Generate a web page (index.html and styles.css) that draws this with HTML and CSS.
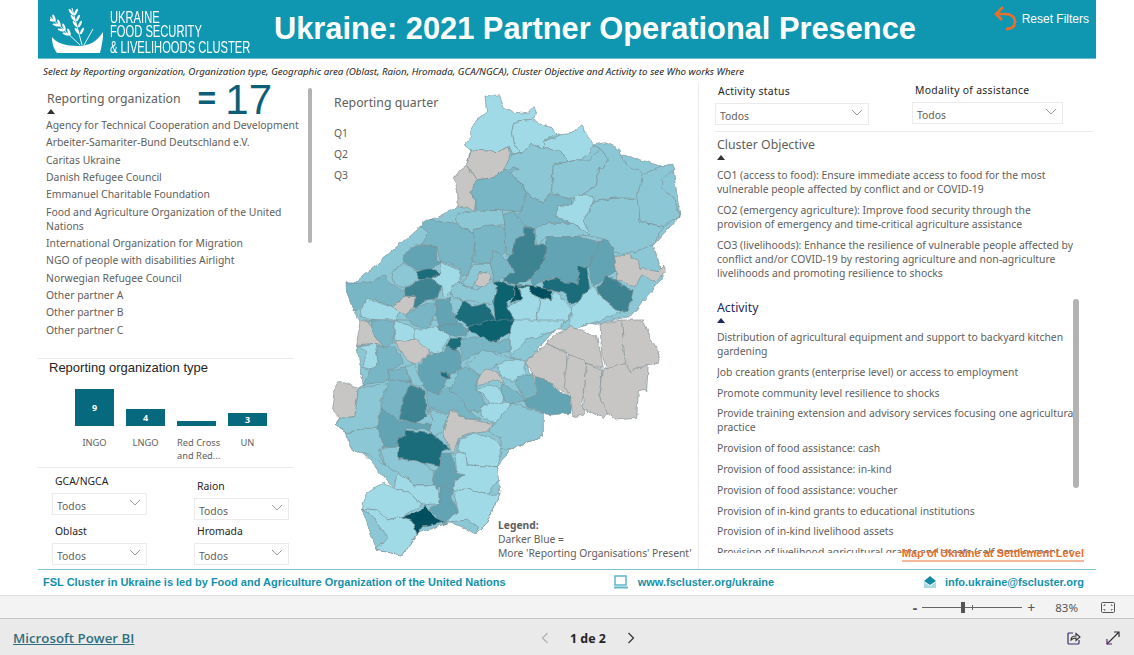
FILE: index.html
```html
<!DOCTYPE html>
<html lang="en">
<head>
    <meta charset="UTF-8">
    <title>Ukraine: 2021 Partner Operational Presence</title>
    <link rel="stylesheet" href="styles.css">
</head>
<body>
<div class="report">
    <header class="banner">
        <div class="logo">
            <svg class="logo-mark" viewBox="50 5 56 50" width="56" height="50">
                <path d="M52 37 C56 43 66 46 78 46 C90 46 97 41 103 32 L103 37 C102 44 101 49 100 53 L57 53 C54 49 52 44 52 37 Z" fill="#fff"/>
                <path d="M48 15 L80 45 M72 8 L82 45 M93 29 L84 45" stroke="#fff" stroke-width="0.9" fill="none"/>
                <g fill="#fff">
                    <ellipse cx="51" cy="20" rx="3.6" ry="1.2" transform="rotate(15 51 20)"/>
                    <ellipse cx="54" cy="18" rx="3.6" ry="1.2" transform="rotate(70 54 18)"/>
                    <ellipse cx="56" cy="25" rx="3.6" ry="1.2" transform="rotate(15 56 25)"/>
                    <ellipse cx="59" cy="23" rx="3.6" ry="1.2" transform="rotate(70 59 23)"/>
                    <ellipse cx="61" cy="30" rx="3.6" ry="1.2" transform="rotate(15 61 30)"/>
                    <ellipse cx="64" cy="27" rx="3.6" ry="1.2" transform="rotate(70 64 27)"/>
                    <ellipse cx="66" cy="34" rx="3.6" ry="1.2" transform="rotate(15 66 34)"/>
                    <ellipse cx="69" cy="32" rx="3.6" ry="1.2" transform="rotate(70 69 32)"/>
                    <ellipse cx="71" cy="12" rx="3.6" ry="1.2" transform="rotate(55 71 12)"/>
                    <ellipse cx="76" cy="12" rx="3.6" ry="1.2" transform="rotate(115 76 12)"/>
                    <ellipse cx="73" cy="18" rx="3.6" ry="1.2" transform="rotate(55 73 18)"/>
                    <ellipse cx="78" cy="18" rx="3.6" ry="1.2" transform="rotate(115 78 18)"/>
                    <ellipse cx="75" cy="24" rx="3.6" ry="1.2" transform="rotate(55 75 24)"/>
                    <ellipse cx="80" cy="24" rx="3.6" ry="1.2" transform="rotate(115 80 24)"/>
                    <ellipse cx="77" cy="31" rx="3.6" ry="1.2" transform="rotate(55 77 31)"/>
                    <ellipse cx="82" cy="31" rx="3.6" ry="1.2" transform="rotate(115 82 31)"/>
                </g>
            </svg>
            <div class="logo-text">UKRAINE<br>FOOD SECURITY<br>&amp; LIVELIHOODS CLUSTER</div>
        </div>
        <h1>Ukraine: 2021 Partner Operational Presence</h1>
        <div class="reset">
            <svg viewBox="0 0 26 26" width="26" height="26"><path d="M3 9 L12 9 C18 9 22 12 22 17 C22 22 18 24 13 24 M10 2 L3 9 L9 15" fill="none" stroke="#e8702a" stroke-width="2.6"/></svg>
            <span>Reset Filters</span>
        </div>
    </header>

    <p class="hint">Select by Reporting organization, Organization type, Geographic area (Oblast, Raion, Hromada, GCA/NGCA), Cluster Objective and Activity to see Who works Where</p>

    <main class="panels">
        <section class="left">
            <div class="org-head">
                <div class="slicer-title">Reporting organization<i class="caret"></i></div>
                <div class="org-count"><span class="eq">=</span><span class="num">17</span></div>
            </div>
            <ul class="org-list">
                <li>Agency for Technical Cooperation and Development</li>
                <li>Arbeiter-Samariter-Bund Deutschland e.V.</li>
                <li>Caritas Ukraine</li>
                <li>Danish Refugee Council</li>
                <li>Emmanuel Charitable Foundation</li>
                <li>Food and Agriculture Organization of the United Nations</li>
                <li>International Organization for Migration</li>
                <li>NGO of people with disabilities Airlight</li>
                <li>Norwegian Refugee Council</li>
                <li>Other partner A</li>
                <li>Other partner B</li>
                <li>Other partner C</li>
            </ul>
            <div class="type-box">
                <h3>Reporting organization type</h3>
                <div class="bars">
                    <div class="bar-col"><div class="bar-slot"><div class="bar" style="height:37px">9</div></div><span>INGO</span></div>
                    <div class="bar-col"><div class="bar-slot"><div class="bar" style="height:17px">4</div></div><span>LNGO</span></div>
                    <div class="bar-col"><div class="bar-slot"><div class="bar" style="height:5px"></div></div><span>Red Cross<br>and Red...</span></div>
                    <div class="bar-col"><div class="bar-slot"><div class="bar" style="height:13px">3</div></div><span>UN</span></div>
                </div>
            </div>
            <div class="geo">
                <div class="geo-col">
                    <label>GCA/NGCA</label>
                    <div class="drop">Todos<svg viewBox="0 0 12 7" width="12" height="7"><path d="M1 1 L6 6 L11 1" fill="none" stroke="#a19f9d"/></svg></div>
                    <label>Oblast</label>
                    <div class="drop">Todos<svg viewBox="0 0 12 7" width="12" height="7"><path d="M1 1 L6 6 L11 1" fill="none" stroke="#a19f9d"/></svg></div>
                </div>
                <div class="geo-col second">
                    <label>Raion</label>
                    <div class="drop">Todos<svg viewBox="0 0 12 7" width="12" height="7"><path d="M1 1 L6 6 L11 1" fill="none" stroke="#a19f9d"/></svg></div>
                    <label>Hromada</label>
                    <div class="drop">Todos<svg viewBox="0 0 12 7" width="12" height="7"><path d="M1 1 L6 6 L11 1" fill="none" stroke="#a19f9d"/></svg></div>
                </div>
            </div>
        </section>

        <section class="middle">
            <div class="quarter">
                <div class="slicer-title">Reporting quarter</div>
                <ul>
                    <li>Q1</li>
                    <li>Q2</li>
                    <li>Q3</li>
                </ul>
            </div>
            <svg class="map" viewBox="0 0 1110 1470" width="370" height="490">
                <defs>
                    <filter id="rough" x="-2%" y="-2%" width="104%" height="104%">
                        <feTurbulence type="fractalNoise" baseFrequency="0.045" numOctaves="2" seed="4"/>
                        <feDisplacementMap in="SourceGraphic" scale="15" xChannelSelector="R" yChannelSelector="G"/>
                    </filter>
                </defs>
                <g filter="url(#rough)">
                <g class="map-base">
                    <polygon class="c2" points="420,180 560,90 800,170 1030,240 1050,378 970,465 1000,560 900,680 700,720 400,720 100,720 50,600 270,410 385,350"/>
                    <polygon class="c2" points="120,690 700,690 590,815 640,1040 540,1080 500,1130 510,1210 470,1300 440,1330 360,1295 265,1330 215,1395 140,1380 95,1255 190,1195 50,1030 15,1005 85,895 100,885 80,765"/>
                </g>
                <g class="map-top">
                    <polygon class="c1" points="465,18 508,14 522,50 555,72 570,70 600,65 612,50 620,70 605,88 570,92 550,100 545,130 548,150 575,190 545,195 535,170 505,185 420,180 403,165 425,140 418,125 440,90 470,70"/>
                    <polygon class="c1" points="570,92 605,88 630,105 665,112 678,130 640,155 642,175 600,160 575,190 548,150 545,130 550,100"/>
                    <polygon class="c1" points="640,155 690,135 725,130 755,102 775,140 790,165 780,190 745,210 715,215 690,185 642,175"/>
                    <polygon class="c2" points="600,160 642,175 690,185 715,215 670,225 665,305 640,335 610,325 585,305 575,280 540,245 520,240 545,195 575,190"/>
                    <polygon class="c2" points="715,215 745,210 775,210 810,175 835,205 820,235 805,240 800,285 750,320 725,325 670,310 665,305 670,225"/>
                    <polygon class="c2" points="790,165 825,158 855,170 870,180 885,220 940,250 925,325 850,325 795,335 750,320 800,285 805,240 820,235 835,205 810,175"/>
                    <polygon class="c2" points="940,250 1025,222 1032,240 995,265 995,295 1030,325 1050,378 1000,410 930,395 920,325"/>
                    <polygon class="g" points="425,180 505,185 535,170 540,205 520,240 495,262 440,270 410,225"/>
                    <polygon class="g" points="410,225 440,270 420,305 440,335 435,362 385,350 382,300 372,265 390,240"/>
                    <polygon class="c3" points="495,262 520,240 545,235 565,235 540,250 575,280 590,320 575,360 550,362 520,360 440,365 440,335 420,305 440,270"/>
                    <polygon class="c3" points="590,305 610,325 640,335 665,312 725,325 725,345 680,350 678,380 730,400 650,400 620,420 575,410 550,375 575,360"/>
                    <polygon class="c2" points="795,335 850,325 925,325 930,395 1000,410 970,465 900,490 850,490 830,450 770,435 760,385"/>
                    <polygon class="c1" points="680,350 725,345 740,315 795,320 790,340 760,385 780,435 735,405 678,380"/>
                    <polygon class="c2" points="650,400 730,400 780,435 740,440 650,440 620,465 612,420"/>
                    <polygon class="c2" points="382,370 440,365 520,360 525,405 480,405 430,430 390,410 380,390"/>
                    <polygon class="c3" points="520,375 550,362 585,410 580,435 552,450 550,495 530,495 520,440 525,405"/>
                    <polygon class="c3" points="430,420 480,405 522,412 525,490 480,520 430,515 435,460"/>
                    <polygon class="c3" points="275,400 290,390 380,400 390,410 430,430 435,460 425,520 415,550 395,560 385,535 330,510 320,470 275,465 295,430 270,410"/>
                    <polygon class="c5" points="580,415 610,415 615,465 650,465 645,510 610,560 560,585 520,575 525,550 555,545 530,510 550,490 552,450 580,435"/>
                    <polygon class="c4" points="650,440 740,440 810,455 785,530 750,530 745,580 705,580 680,565 640,570 610,590 605,565 645,510"/>
                    <polygon class="c4" points="810,455 830,445 850,480 850,510 860,540 830,560 790,590 775,530"/>
                    <polygon class="g" points="850,505 890,490 920,510 930,535 985,545 1005,525 1005,545 975,575 935,555 915,590 860,570 860,540"/>
                    <polygon class="c5" points="830,560 860,570 880,590 910,600 895,665 860,660 815,625 800,595"/>
                    <polygon class="c6" points="745,530 770,530 780,600 750,635 720,640 705,610 640,595 635,575 680,565 705,580 745,580"/>
                    <polygon class="c3" points="490,480 530,510 555,545 525,560 495,575 480,520"/>
                    <polygon class="c2" points="430,520 480,520 495,575 485,570 470,545 450,545 430,595 390,580 415,550"/>
                    <polygon class="g" points="435,575 445,555 470,545 483,560 480,575 465,595 445,590"/>
                    <polygon class="c4" points="220,495 245,470 275,465 320,470 320,510 335,515 300,540 255,540 240,525 220,515"/>
                    <polygon class="c1" points="330,515 385,540 395,560 385,580 345,625 335,590 300,565 330,550"/>
                    <polygon class="c6" points="255,545 300,535 330,550 300,565 270,570"/>
                    <polygon class="c2" points="185,545 220,520 240,525 255,545 270,570 225,590 195,585"/>
                    <polygon class="c3" points="48,578 85,580 130,575 160,555 190,590 225,600 220,620 190,650 150,635 120,625 100,650 70,660 50,610"/>
                    <polygon class="c5" points="225,595 270,570 300,565 335,590 325,625 290,630 255,655 225,620"/>
                    <polygon class="g" points="190,650 225,618 255,620 250,655 225,675 205,665"/>
                    <polygon class="c2" points="360,585 385,580 440,600 490,575 500,590 490,640 470,640 420,635 400,630 365,620"/>
                    <polygon class="c1" points="90,655 115,625 130,635 190,650 205,665 200,690 150,690 95,685"/>
                    <polygon class="c3" points="255,655 290,640 315,640 320,670 290,720 240,700 230,675"/>
                    <polygon class="c4" points="315,630 360,625 370,670 395,720 330,720 320,680"/>
                    <polygon class="c6" points="375,680 400,630 430,650 465,640 500,690 470,715 420,715"/>
                    <polygon class="c7" points="490,575 500,572 555,590 550,620 530,640 550,680 550,720 500,720 490,640 500,590"/>
                    <polygon class="c1" points="565,590 595,592 610,615 630,625 620,690 570,720 550,680 530,650 575,630"/>
                    <polygon class="c8" points="555,585 610,590 640,595 670,605 660,630 610,615 595,592 565,590 570,615 580,625 540,640 550,620"/>
                    <polygon class="c1" points="630,625 660,630 680,605 725,655 715,690 640,720 620,690"/>
                    <polygon class="c1" points="725,655 760,615 785,590 800,600 815,625 860,660 875,665 815,690 720,720"/>
                </g>
                <g class="map-bottom" transform="translate(0 690)">
                    <polygon class="g" points="90,5 115,0 125,35 162,40 160,78 120,70 80,75 85,40"/>
                    <polygon class="c3" points="125,0 190,0 190,70 160,80 125,35"/>
                    <polygon class="c1" points="190,0 245,20 255,30 260,60 215,65 195,60"/>
                    <polygon class="c1" points="255,30 320,20 360,45 345,70 330,110 295,90 255,65"/>
                    <polygon class="c4" points="320,20 385,10 415,30 410,50 380,50 360,45"/>
                    <polygon class="c7" points="415,20 490,0 550,0 550,30 490,70 415,30"/>
                    <polygon class="c1" points="550,0 700,0 690,25 610,55 590,60 540,110 540,50"/>
                    <polygon class="g" points="195,65 260,60 300,90 300,105 250,135 215,100"/>
                    <polygon class="c1" points="80,78 135,70 145,130 120,150 98,145 110,95"/>
                    <polygon class="c3" points="140,80 195,80 220,130 175,150 175,180 100,195 120,150 145,130"/>
                    <polygon class="c4" points="265,135 295,105 340,95 365,70 395,110 390,150 360,160 345,195 320,230 280,200 265,170"/>
                    <polygon class="c6" points="360,55 395,55 395,75 375,90 350,80"/>
                    <polygon class="c6" points="330,155 355,160 358,178 338,168"/>
                    <polygon class="c3" points="390,60 460,50 500,70 540,55 540,95 480,100 430,100 395,130"/>
                    <polygon class="c2" points="410,130 460,90 520,110 570,115 580,140 560,165 500,135 445,165"/>
                    <polygon class="c3" points="175,150 230,140 240,185 175,180"/>
                    <polygon class="c2" points="230,135 250,135 275,185 280,200 245,195"/>
                    <polygon class="g" points="15,195 35,185 85,205 80,250 75,290 30,295 5,270"/>
                    <polygon class="c2" points="85,205 175,190 175,230 150,240 150,265 145,325 100,325 50,340 15,315 30,295 75,290"/>
                    <polygon class="c3" points="178,180 240,185 240,230 205,300 150,258"/>
                    <polygon class="c5" points="240,195 285,210 290,290 255,310 205,295 220,235"/>
                    <polygon class="c4" points="155,260 205,300 255,310 300,310 300,330 230,325 225,350 205,350 205,385 160,380 145,325"/>
                    <polygon class="c3" points="290,210 325,225 350,200 390,225 415,270 450,300 415,300 370,270 340,280 300,260 295,285"/>
                    <polygon class="c2" points="300,265 340,285 360,275 340,330 310,355 295,330 305,300"/>
                    <polygon class="g" points="360,270 415,300 490,310 470,335 430,340 385,355 370,400 340,345"/>
                    <polygon class="c2" points="50,340 100,325 145,325 160,380 150,410 165,435 110,400 70,395 55,365"/>
                    <polygon class="c6" points="205,350 225,350 225,330 300,340 360,385 335,395 330,440 280,430 205,415"/>
                    <polygon class="c2" points="150,385 205,380 205,415 280,430 310,450 310,495 255,495 205,460 165,435"/>
                    <polygon class="c4" points="335,400 365,400 380,460 405,465 375,480 370,510 325,500 310,510 315,450 330,440"/>
                    <polygon class="c1" points="385,360 440,340 500,360 515,385 500,440 415,435 410,400 380,395"/>
                    <polygon class="c1" points="375,400 410,400 415,435 500,440 505,480 470,525 415,505 370,515 375,480 405,465 380,460"/>
                    <polygon class="c1" points="205,460 255,495 310,495 330,515 330,550 275,555 240,520 190,505"/>
                    <polygon class="c1" points="110,520 160,490 190,505 240,520 275,555 215,590 170,600 140,570 95,565"/>
                    <polygon class="c4" points="330,495 370,510 365,530 385,575 340,615 295,565 330,550"/>
                    <polygon class="c1" points="370,515 415,505 470,525 510,520 490,565 470,610 440,640 445,620 415,600 360,605 340,610 385,575"/>
                    <polygon class="c1" points="95,565 140,570 170,600 215,590 245,600 265,640 215,705 140,690 170,650 130,590"/>
                    <polygon class="c8" points="215,590 265,575 285,555 310,590 340,605 315,615 280,620 262,645 245,600"/>
                    <polygon class="g" points="585,125 650,70 710,100 715,230 650,180 615,170"/>
                    <polygon class="g" points="680,45 720,20 800,50 810,90 820,145 770,130 715,100 650,70"/>
                    <polygon class="g" points="715,100 770,130 765,200 755,250 765,285 725,290 725,225 700,200"/>
                    <polygon class="g" points="770,130 820,150 810,225 840,265 820,295 760,265"/>
                    <polygon class="g" points="820,150 880,130 955,130 950,210 925,215 920,295 860,300 830,275 810,225"/>
                    <polygon class="g" points="810,10 875,0 880,50 900,100 885,130 830,150 815,100"/>
                    <polygon class="g" points="875,0 940,0 965,60 990,100 985,130 945,135 900,155 885,130"/>
                    <polygon class="c3" points="385,150 410,140 445,165 440,200 470,260 450,275 415,270 385,225 360,215"/>
                    <polygon class="c1" points="500,135 560,115 585,125 585,165 545,185 515,165"/>
                    <polygon class="g" points="445,175 465,145 510,160 520,190 490,180 445,195"/>
                    <polygon class="c1" points="435,210 480,195 520,210 515,255 480,250 460,220"/>
                    <polygon class="c1" points="450,260 480,250 545,250 500,310 460,295"/>
                    <polygon class="c2" points="545,250 640,280 640,350 540,390 515,385 510,350 475,335 495,310"/>
                    <polygon class="c3" points="515,190 570,220 590,240 545,250 520,245"/>
                    <polygon class="c3" points="565,170 610,160 620,225 590,240 555,190"/>
                    <polygon class="c4" points="615,170 650,180 700,225 725,225 720,280 660,285 590,260 585,240 620,225"/>
                </g>
                </g>
            </svg>
            <div class="legend"><b>Legend:</b><br>Darker Blue =<br>More 'Reporting Organisations' Present'</div>
        </section>

        <section class="right">
            <div class="right-drops">
                <div class="drop-wrap">
                    <label>Activity status</label>
                    <div class="drop">Todos<svg viewBox="0 0 12 7" width="12" height="7"><path d="M1 1 L6 6 L11 1" fill="none" stroke="#a19f9d"/></svg></div>
                </div>
                <div class="drop-wrap modality">
                    <label>Modality of assistance</label>
                    <div class="drop">Todos<svg viewBox="0 0 12 7" width="12" height="7"><path d="M1 1 L6 6 L11 1" fill="none" stroke="#a19f9d"/></svg></div>
                </div>
            </div>
            <div class="objective">
                <div class="slicer-title">Cluster Objective<i class="caret"></i></div>
                <ul class="long-list">
                    <li>CO1 (access to food): Ensure immediate access to food for the most vulnerable people affected by conflict and or COVID-19</li>
                    <li>CO2 (emergency agriculture): Improve food security through the provision of emergency and time-critical agriculture assistance</li>
                    <li>CO3 (livelihoods): Enhance the resilience of vulnerable people affected by conflict and/or COVID-19 by restoring agriculture and non-agriculture livelihoods and promoting resilience to shocks</li>
                </ul>
            </div>
            <div class="activity">
                <div class="slicer-title navy">Activity<i class="caret navy-caret"></i></div>
                <ul class="long-list">
                    <li>Distribution of agricultural equipment and support to backyard kitchen gardening</li>
                    <li>Job creation grants (enterprise level) or access to employment</li>
                    <li>Promote community level resilience to shocks</li>
                    <li>Provide training extension and advisory services focusing one agricultural practice</li>
                    <li>Provision of food assistance: cash</li>
                    <li>Provision of food assistance: in-kind</li>
                    <li>Provision of food assistance: voucher</li>
                    <li>Provision of in-kind grants to educational institutions</li>
                    <li>Provision of in-kind livelihood assets</li>
                    <li>Provision of livelihood agricultural grants and assets (self-employment or</li>
                </ul>
                <div class="scroll-thumb"></div>
            </div>
            <a class="map-link">Map of Ukraine at Settlement Level</a>
        </section>
    </main>

    <footer class="report-foot">
        <span class="led">FSL Cluster in Ukraine is led by Food and Agriculture Organization of the United Nations</span>
        <span class="foot-link site">
            <svg viewBox="0 0 16 14" width="16" height="14"><path d="M2 1 H13 V10 H2 Z" fill="none" stroke="#5fb6c9" stroke-width="1.5"/><path d="M1 12.5 H15" stroke="#5fb6c9" stroke-width="2"/></svg>
            www.fscluster.org/ukraine
        </span>
        <span class="foot-link">
            <svg viewBox="0 0 14 14" width="14" height="14"><path d="M1 6 L7 1 L13 6 L7 10 Z" fill="#1589a3"/><path d="M1 7 V13 H13 V7 L7 11 Z" fill="#a9dbe6"/></svg>
            info.ukraine@fscluster.org
        </span>
    </footer>
</div>

<div class="zoombar">
    <span class="zoom-sign">-</span>
    <div class="slider"><i class="tick"></i><i class="knob"></i></div>
    <span class="zoom-sign plus">+</span>
    <span class="pct">83%</span>
    <svg viewBox="0 0 14 11" width="14" height="11"><rect x="0.5" y="0.5" width="13" height="10" rx="1" fill="none" stroke="#555"/><path d="M3 4 V3 H4.5 M10 3 H11 V4 M3 7 V8 H4.5 M10 8 H11 V7" fill="none" stroke="#555"/></svg>
</div>

<div class="pbibar">
    <a class="pbi-link">Microsoft Power BI</a>
    <div class="pager">
        <svg viewBox="0 0 8 12" width="8" height="12"><path d="M6.5 1 L1.5 6 L6.5 11" fill="none" stroke="#b3b0ad" stroke-width="1.2"/></svg>
        <b>1 de 2</b>
        <svg viewBox="0 0 8 12" width="8" height="12"><path d="M1.5 1 L6.5 6 L1.5 11" fill="none" stroke="#333" stroke-width="1.2"/></svg>
    </div>
    <div class="pbi-actions">
        <svg viewBox="0 0 14 14" width="14" height="14"><path d="M6 2 H2 Q1 2 1 3 V12 Q1 13 2 13 H11 Q12 13 12 12 V9" fill="none" stroke="#3b2a6b" stroke-width="1.2"/><path d="M4 9 C4 6 6 5 9 5 V2.5 L13 6 L9 9.5 V7 C7 7 5 8 4 9 Z" fill="none" stroke="#333" stroke-width="1.1"/></svg>
        <svg viewBox="0 0 14 14" width="14" height="14"><path d="M1 13 L13 1 M8 1 H13 V6" fill="none" stroke="#333" stroke-width="1.2"/><path d="M1 8 V13 H6" fill="none" stroke="#5c1a7a" stroke-width="1.2"/></svg>
    </div>
</div>
</body>
</html>
```
FILE: styles.css
```css
* {
    box-sizing: border-box;
}
html, body {
    margin: 0;
    height: 655px;
    overflow: hidden;
}
body {
    font-family: "Noto Sans", "Open Sans", sans-serif;
    color: #605e5c;
    background: #fff;
    display: flex;
    flex-direction: column;
}
ul {
    list-style: none;
    margin: 0;
    padding: 0;
}
.report {
    height: 595px;
    margin: 0 38px;
    display: flex;
    flex-direction: column;
}
.banner {
    height: 59px;
    flex: none;
    background: #0f97b1;
    border-bottom: 1px solid #6fbfd0;
    display: flex;
    align-items: flex-start;
    color: #fff;
}
.logo {
    display: flex;
    width: 236px;
    padding: 5px 0 0 12px;
    flex: none;
}
.logo-mark {
    flex: none;
}
.logo-text {
    font-family: "Liberation Sans", sans-serif;
    font-size: 15px;
    line-height: 13.3px;
    margin: 4px 0 0 4px;
    white-space: nowrap;
    transform: scale(0.745, 1.13);
    transform-origin: left top;
}
.banner h1 {
    font-family: "Liberation Sans", Arial, sans-serif;
    font-size: 30.8px;
    font-weight: bold;
    margin: 11px 0 0 0;
    white-space: nowrap;
}
.reset {
    margin: 5px 0 0 auto;
    padding-right: 7px;
    display: flex;
    font-family: "Liberation Sans", Arial, sans-serif;
    font-size: 12px;
    gap: 3px;
}
.reset span {
    margin-top: 7px;
}
.hint {
    height: 24px;
    flex: none;
    margin: 0;
    padding: 6px 0 0 5px;
    font-size: 9.75px;
    font-style: italic;
    color: #252423;
    white-space: nowrap;
}
.panels {
    flex: 1;
    display: flex;
    min-height: 0;
    position: relative;
}
.slicer-title {
    font-size: 12.3px;
    color: #605e5c;
}
.caret {
    display: block;
    width: 0;
    height: 0;
    margin-top: 2px;
    border: 4px solid transparent;
    border-top: 0;
    border-bottom: 5px solid #333;
}
.navy-caret {
    border-bottom-color: #1b2a5e;
}
.left {
    width: 270px;
    flex: none;
    display: flex;
    flex-direction: column;
    font-size: 10.4px;
    position: relative;
}
.left > * {
    flex: none;
}
.org-head {
    display: flex;
    height: 35px;
    padding: 7px 0 0 9px;
}
.org-count {
    color: #0d5f78;
    font-family: "Liberation Sans", Arial, sans-serif;
    margin-left: 17px;
    margin-top: -14px;
    white-space: nowrap;
}
.org-count .eq {
    font-size: 32px;
    font-weight: bold;
    vertical-align: 5px;
}
.org-count .num {
    font-size: 42px;
    margin-left: 9px;
}
.org-list {
    padding: 0 0 0 8px;
    line-height: 14px;
    height: 240px;
}
.org-list li {
    margin-bottom: 3.35px;
    width: 258px;
}
.type-box {
    width: 256px;
    border-top: 1px solid #edebe9;
    border-bottom: 1px solid #edebe9;
    height: 110px;
}
.type-box h3 {
    margin: 0;
    padding: 1px 0 0 11px;
    font-size: 13px;
    font-weight: normal;
    font-family: "Liberation Sans", Arial, sans-serif;
    color: #252423;
}
.bars {
    display: flex;
    padding: 14px 0 0 37px;
    gap: 12px;
}
.bar-col {
    width: 39px;
    font-size: 9.3px;
    line-height: 13px;
    text-align: center;
    white-space: nowrap;
}
.bar-slot {
    height: 37px;
    display: flex;
    align-items: flex-end;
    margin-bottom: 10px;
}
.bar {
    width: 100%;
    background: #06697d;
    color: #fff;
    font-weight: bold;
    font-size: 9px;
    display: flex;
    align-items: center;
    justify-content: center;
}
.geo {
    display: flex;
    padding: 6px 0 0 14px;
}
.geo-col {
    width: 142px;
    flex: none;
    display: flex;
    flex-direction: column;
}
.geo-col.second {
    padding-top: 5px;
}
label {
    font-size: 10.4px;
    line-height: 14px;
    color: #252423;
    display: block;
    padding-left: 3px;
}
.geo-col .drop {
    margin: 5px 0 9px;
}
.geo-col.second .drop {
    margin: 5px 0 4px;
}
.drop {
    width: 95px;
    height: 22px;
    margin-top: 4px;
    border: 1px solid #edebe9;
    padding: 3px 5px 0 4px;
    font-size: 10.4px;
    display: flex;
    align-items: center;
    justify-content: space-between;
}
.drop svg {
    margin-top: -6px;
}
.middle {
    width: 391px;
    flex: none;
    position: relative;
    border-right: 1px solid #edebe9;
}
.middle::before {
    content: "";
    position: absolute;
    left: 0;
    top: 5px;
    width: 4px;
    height: 155px;
    background: #b3b3b3;
    border-radius: 2px;
}
.quarter {
    padding: 11px 0 0 26px;
    position: relative;
    z-index: 1;
}
.quarter ul {
    margin-top: 15px;
    font-size: 10.4px;
}
.quarter li {
    height: 21px;
}
.map {
    position: absolute;
    left: 22px;
    top: 7px;
}
.map polygon {
    stroke: #7f8f94;
    stroke-width: 2;
    stroke-linejoin: round;
}
.c1 { fill: #9fdae6; }
.c2 { fill: #8cc7d5; }
.c3 { fill: #78b6c6; }
.c4 { fill: #62a3b4; }
.c5 { fill: #3e8392; }
.c6 { fill: #1f6d7c; }
.c7 { fill: #0f6270; }
.c8 { fill: #00505f; }
.g { fill: #c8c6c4; }
.legend {
    position: absolute;
    left: 190px;
    top: 435px;
    font-size: 10.3px;
    line-height: 14px;
    white-space: nowrap;
}
.right {
    flex: 1;
    position: relative;
    padding-left: 16px;
}
.right-drops {
    display: flex;
    height: 49px;
    width: 378px;
    border-bottom: 1px solid #edebe9;
}
.drop-wrap label {
    letter-spacing: 0.3px;
    margin-top: 1px;
}
.drop-wrap .drop {
    width: 154px;
    margin-top: 5px;
}
.modality {
    margin-left: 43px;
    margin-top: -1px;
}
.modality .drop {
    width: 151px;
}
.objective {
    padding: 4px 0 0 2px;
}
.long-list {
    font-size: 10.4px;
    line-height: 14px;
    width: 364px;
    margin-top: 8px;
}
.objective .long-list {
    width: 358px;
}
.objective li {
    margin-bottom: 7px;
}
.activity {
    position: relative;
    height: 254px;
    overflow: hidden;
    margin: 19px 0 0 2px;
}
.activity .long-list {
    margin-top: 7px;
}
.activity li {
    margin-bottom: 6.8px;
}
.navy {
    color: #1b2a5e;
}
.scroll-thumb {
    position: absolute;
    left: 356px;
    top: 0;
    width: 6px;
    height: 189px;
    background: #b3b3b3;
    border-radius: 3px;
}
.map-link {
    position: absolute;
    right: 12px;
    bottom: 7px;
    font-family: "Liberation Sans", Arial, sans-serif;
    font-weight: bold;
    font-size: 11px;
    line-height: 13px;
    color: #e8702a;
    border-bottom: 2px solid #f5b89c;
}
.report-foot {
    height: 26px;
    flex: none;
    border-top: 1px solid #7cc4cf;
    display: flex;
    align-items: center;
    padding: 0 12px 2px 5px;
    font-family: "Liberation Sans", Arial, sans-serif;
    font-size: 11px;
    font-weight: bold;
    color: #1391ab;
    white-space: nowrap;
}
.foot-link {
    display: flex;
    align-items: center;
    gap: 8px;
    margin-left: auto;
}
.site {
    margin-left: 107px;
    gap: 9px;
}
.zoombar {
    height: 23px;
    flex: none;
    background: #f3f3f3;
    border-top: 1px solid #e1e1e1;
    display: flex;
    align-items: center;
    justify-content: flex-end;
    padding-right: 19px;
    font-size: 11.5px;
    color: #555;
}
.zoom-sign {
    font-size: 14px;
    font-weight: bold;
}
.plus {
    margin-left: 5px;
    font-weight: normal;
}
.slider {
    width: 100px;
    height: 1px;
    background: #666;
    margin-left: 5px;
    position: relative;
}
.tick {
    position: absolute;
    left: 50px;
    top: -2px;
    width: 1px;
    height: 5px;
    background: #666;
}
.knob {
    position: absolute;
    left: 39px;
    top: -5px;
    width: 4px;
    height: 11px;
    background: #555;
}
.pct {
    margin: 0 23px 0 20px;
}
.pbibar {
    height: 37px;
    flex: none;
    background: #eaeaea;
    border-top: 1px solid #c8c6c4;
    display: flex;
    align-items: center;
    padding: 2px 14px 0 13px;
    position: relative;
}
.pbi-link {
    font-family: "Open Sans", sans-serif;
    font-size: 13.3px;
    font-weight: 600;
    color: #2f6f7e;
    text-decoration: underline;
}
.pager {
    position: absolute;
    left: 541px;
    display: flex;
    align-items: center;
    gap: 21px;
    font-size: 12.4px;
    color: #252423;
}
.pbi-actions {
    margin-left: auto;
    display: flex;
    gap: 25px;
}
```
